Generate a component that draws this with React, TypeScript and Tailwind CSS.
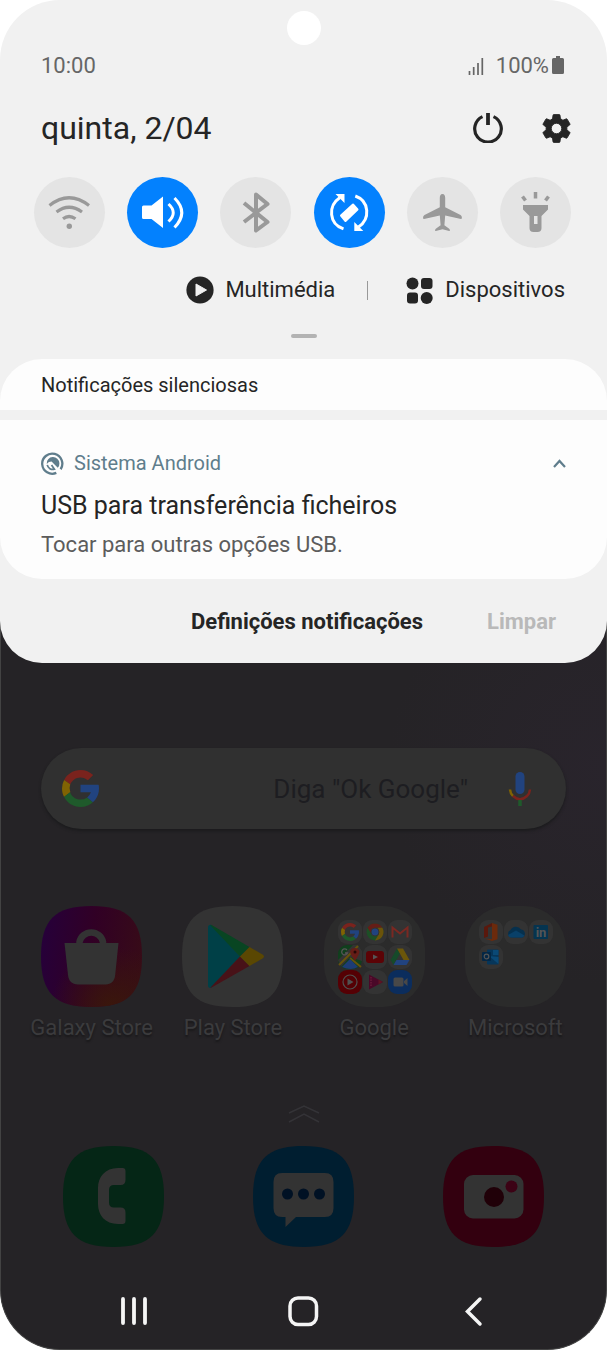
import React from "react";

interface IconProps {
  className?: string;
}

interface QuickToggle {
  label: string;
  on: boolean;
  icon: React.ReactNode;
}

const GoogleG: React.FC<IconProps> = ({ className }) => (
  <svg viewBox="4 4 40 40" className={className} aria-hidden="true">
    <path fill="#7a231d" d="M6.3 14.7l6.600 4.800C14.700 15.100 19 12 24 12c3.100 0 5.800 1.200 8 3.100l5.700-5.700C34 6 29.300 4 24 4 16.300 4 9.700 8.300 6.300 14.700z" />
    <path fill="#806303" d="M6.300 14.700A20 20 0 0 0 4 24c0 3.300.8 6.500 2.300 9.300l6.700-5.200a12 12 0 0 1-.1-8.600z" />
    <path fill="#1f5a2b" d="M24 44c5.200 0 9.900-2 13.400-5.200l-6.200-5.200A12 12 0 0 1 24 36c-5.200 0-9.600-3.300-11.300-8l-6.500 5C9.500 39.600 16.200 44 24 44z" />
    <path fill="#21437f" d="M43.600 20H24v8h11.300a12 12 0 0 1-4.100 5.600l6.200 5.200C37 39.200 44 34 44 24c0-1.300-.1-2.700-.4-4z" />
  </svg>
);

const SQUIRCLE =
  "M50.500 0C87 0 101 14 101 50.500S87 101 50.500 101 0 87 0 50.500 14 0 50.500 0Z";

const TOGGLES: QuickToggle[] = [
  {
    label: "Wi-Fi",
    on: false,
    icon: (
      <g fill="none" stroke="currentColor" strokeWidth="3.200">
        <path d="M15.500 28.500q19.500-15.500 39.500 0M22.500 35q12.500-9.500 25.500 0M29 41.800q6-4.600 12.500 0" />
        <circle cx="35.300" cy="49.300" r="2.700" fill="currentColor" stroke="none" />
      </g>
    ),
  },
  {
    label: "Som",
    on: true,
    icon: (
      <g fill="none" stroke="currentColor" strokeWidth="3">
        <path d="M16.500 28.500h8L36 19.500V51L24.500 42h-8a1.500 1.500 0 0 1-1.500-1.500V30a1.500 1.500 0 0 1 1.500-1.500z" fill="currentColor" stroke="none" />
        <path d="M41.500 27q9.500 8.500 0 17.500M47.500 21q14.500 14.500 0 29.500" />
      </g>
    ),
  },
  {
    label: "Bluetooth",
    on: false,
    icon: (
      <path d="M24 26l23.500 19L36 53.500v-36L47.500 27 24 45" fill="none" stroke="currentColor" strokeWidth="4" strokeLinejoin="round" />
    ),
  },
  {
    label: "Rotação automática",
    on: true,
    icon: (
      <g fill="none" stroke="currentColor" strokeWidth="3">
        <path d="M29.500 51.800C15 47 13.500 29 26 20.500M41.300 19C55.500 24 56.500 42 44.500 50" />
        <path d="M21.500 17H30.500v9zM40.300 54v-9l9 9z" fill="currentColor" stroke="none" />
        <path d="M39 27.500l4.500 5L31.500 44 27 38.500z" fill="currentColor" strokeWidth="2" strokeLinejoin="round" />
      </g>
    ),
  },
  {
    label: "Modo de voo",
    on: false,
    icon: (
      <path
        fill="currentColor"
        d="M35.500 17c-2 0-2.700 2-2.700 4v9.300L17.500 38c-1.500.8-2 4.200-.5 4l15.800-3.500.8 9.700-4.800 3.600c-1 .8-1 2.500 0 2.200l6.700-1.700 6.700 1.700c1 .3 1-1.400 0-2.200l-4.800-3.600.8-9.700L54 42c1.500.2 1-3.200-.5-4l-15.300-7.700V21c0-2-.7-4-2.700-4z"
      />
    ),
  },
  {
    label: "Lanterna",
    on: false,
    icon: (
      <g>
        <path
          fill="currentColor"
          fillRule="evenodd"
          d="M23 28h25v4.500L41.500 39v12a4 4 0 0 1-4 4h-4a4 4 0 0 1-4-4V39L23 32.500zM34 39v8h3.500v-8z"
        />
        <path d="M35.500 15v6.500M22.500 19.500l3 4M48.500 19.500l-3 4" stroke="currentColor" strokeWidth="3.500" />
      </g>
    ),
  },
];

const GalaxyStoreIcon: React.FC = () => (
  <svg viewBox="0 0 101 101" className="size-[101px]" aria-hidden="true">
    <defs>
      <linearGradient id="store" x1="0" y1="0.300" x2="1" y2="0.450">
        <stop offset="0" stopColor="#26003a" />
        <stop offset="0.500" stopColor="#310025" />
        <stop offset="1" stopColor="#370b18" />
      </linearGradient>
      <radialGradient id="glow" cx="0.700" cy="1" r="0.600">
        <stop offset="0" stopColor="#3a170b" />
        <stop offset="1" stopColor="#3a170b" stopOpacity="0" />
      </radialGradient>
    </defs>
    <path d={SQUIRCLE} fill="url(#store)" />
    <path d={SQUIRCLE} fill="url(#glow)" />
    <path d="M38.500 39v-3a12 12 0 0 1 23.500 0v3" fill="none" stroke="#333333" strokeWidth="6.500" />
    <path d="M23.500 37h54l-3.300 32c-.7 6-4 9.500-9.500 9.500H37c-6 0-9.300-3.500-10-9.500z" fill="#333333" />
  </svg>
);

const PlayStoreIcon: React.FC = () => (
  <svg viewBox="0 0 101 101" className="size-[101px]" aria-hidden="true">
    <path d={SQUIRCLE} fill="#333333" />
    <path d="M26 21c0-1.500 1.500-3 3.500-2L58 50.500 29.500 81.500c-2 1-3.500 0-3.500-2z" fill="#004047" />
    <path d="M28 19l2 .3L67.500 41 58 50.500z" fill="#084522" />
    <path d="M28 82l2-.7L67.500 60 58 50.500z" fill="#481218" />
    <path d="M67.500 41l13 7.500q3 2 0 4l-13 7.500-9.500-9.500z" fill="#5a4702" />
  </svg>
);

const Tile: React.FC<{ fill?: string; children: React.ReactNode }> = ({
  fill = "#333333",
  children,
}) => (
  <svg viewBox="0 0 24 24" className="size-6" aria-hidden="true">
    <rect width="24" height="24" rx="9" fill={fill} />
    {children}
  </svg>
);

const GoogleFolder: React.FC = () => (
  <div className="grid grid-cols-[24px_24px_24px] gap-px">
    <div className="flex size-6 items-center justify-center rounded-[9px] bg-[#333333]">
      <GoogleG className="size-[18px]" />
    </div>
    <Tile>
      <circle cx="12" cy="12" r="8.500" fill="#1d4f26" />
      <path d="M4.600 7.800A8.500 8.500 0 0 1 19.400 7.800H12L8.500 14z" fill="#651d17" />
      <path d="M19.400 7.800A8.500 8.500 0 0 1 12 20.500l4-6.500-1-6.200z" fill="#6b530a" />
      <circle cx="12" cy="12" r="4" fill="#21437f" stroke="#333333" />
    </Tile>
    <Tile>
      <path d="M4.500 17.500V7.500L12 13.500l7.500-6v10" fill="none" stroke="#7a2822" strokeWidth="2" />
    </Tile>
    <Tile fill="#103f1d">
      <path d="M0 15L15 0h5l4 6v10L12 12 3 22z" fill="#343332" />
      <path d="M1 20L20 1M12 13l11 9" stroke="#66530b" strokeWidth="2" />
      <path d="M4 22l8-8 8 8q-7 4-16 0z" fill="#1d3c75" />
      <path d="M17 16q-5-7-5-9.500a5 5 0 0 1 9.500 0Q21.500 9 17 16z" fill="#651d17" />
      <circle cx="17" cy="7" r="1.500" fill="#240806" />
      <path d="M9 5a3 3 0 1 0 .5 3H7" fill="none" stroke="#555555" strokeWidth="1.300" />
    </Tile>
    <Tile>
      <rect x="3" y="6" width="18" height="12" rx="3" fill="#5c0306" />
      <path d="M10 9.500l5 2.500-5 2.500z" fill="#555555" />
    </Tile>
    <Tile>
      <path d="M9 3.500L2.500 15l3 5L12 8.500z" fill="#164a2a" />
      <path d="M9 3.500h6L21.500 15h-6z" fill="#6b560a" />
      <path d="M8.500 15h13l-3 5h-13z" fill="#21437f" />
    </Tile>
    <Tile fill="#550004">
      <circle cx="12" cy="12" r="7" fill="none" stroke="#505050" strokeWidth="1.200" />
      <path d="M9.500 8.500l6 3.500-6 3.500z" fill="#505050" />
    </Tile>
    <Tile>
      <path d="M6 4.500L20 12 6 19.500z" fill="#4a0828" />
      <path d="M8 7v10" stroke="#6a1839" strokeWidth="1.500" strokeDasharray="1.500 1" />
      <path d="M15.500 9.600l4 2.400-4 2.400z" fill="#601423" />
    </Tile>
    <Tile fill="#0b2d5d">
      <rect x="5.500" y="7.500" width="10" height="9" rx="1.500" fill="#484848" />
      <path d="M16 11l3.500-3v8L16 13z" fill="#484848" />
    </Tile>
  </div>
);

const MicrosoftFolder: React.FC = () => (
  <div className="grid grid-cols-[24px_24px_24px] gap-px">
    <Tile>
      <path d="M5 7l8-4v3.500L9 7.500v9L5 18z" fill="#5a180c" />
      <path d="M13 3l5.500 1.700v14.500L13 21l-7-2.500 7 .7z" fill="#6b2a0c" />
    </Tile>
    <Tile>
      <path d="M7 17.500a4 4 0 0 1-.5-7.500 6 6 0 0 1 10.500-.5 4.200 4.200 0 0 1 1.500 8z" fill="#06304d" />
      <path d="M4 15l8-4.500 8.500 5q-1 2-2.500 2H7q-2 0-3-2.500z" fill="#094068" />
    </Tile>
    <Tile>
      <rect x="4.500" y="5" width="14.500" height="14" rx="1" fill="#053450" />
      <text x="12" y="16.500" textAnchor="middle" className="font-[Roboto] text-[13px] font-bold" fill="#555555">in</text>
    </Tile>
    <Tile>
      <rect x="8" y="4.500" width="11.500" height="15" rx="1" fill="#06365a" />
      <path d="M14 5h5.500v5H14zM10 11l9.500 1v7z" fill="#0a4976" />
      <rect x="3" y="7" width="9" height="9" rx="1" fill="#042745" />
      <circle cx="7.500" cy="11.500" r="2.300" fill="none" stroke="#555555" strokeWidth="1.200" />
    </Tile>
  </div>
);

const Folder: React.FC<{ children: React.ReactNode }> = ({ children }) => (
  <div className="size-[101px] rounded-[42px] bg-[#2b2b2b] p-[14px]">{children}</div>
);

const APPS = [
  { name: "Galaxy Store", icon: <GalaxyStoreIcon /> },
  { name: "Play Store", icon: <PlayStoreIcon /> },
  { name: "Google", icon: <Folder><GoogleFolder /></Folder> },
  { name: "Microsoft", icon: <Folder><MicrosoftFolder /></Folder> },
];

const DOCK = [
  {
    name: "Telefone",
    fill: "#052616",
    icon: (
      <path
        fill="#333333"
        d="M55 22h4.500q3 0 3 3V34q0 5-5 5h-6.500q-5 0-5 5v12.500q0 5 5 5h6.500q5 0 5 5v8.500q0 3-3 3H55C42 78 35 69 35 58V42C35 31 42 22 55 22z"
      />
    ),
  },
  {
    name: "Mensagens",
    fill: "#001e30",
    icon: (
      <g>
        <path fill="#333333" d="M29 27h43q8.500 0 8.500 9v26q0 9-8.500 9H43L32.500 81V71H29q-8.500 0-8.500-9V36q0-9 8.500-9z" />
        <g fill="#001124">
          <circle cx="34.500" cy="48" r="5.500" />
          <circle cx="50.500" cy="48" r="5.500" />
          <circle cx="66.500" cy="48" r="5.500" />
        </g>
      </g>
    ),
  },
  {
    name: "Câmara",
    fill: "#33000f",
    icon: (
      <g>
        <rect x="21" y="29" width="59.500" height="43.500" rx="9" fill="#333333" />
        <circle cx="51" cy="51" r="10" fill="#200008" />
        <circle cx="68.500" cy="40.500" r="6" fill="#3c0215" />
      </g>
    ),
  },
];

const NotificationPanel: React.FC = () => (
  <section className="relative rounded-t-[60px] rounded-b-[42px] bg-[#f1f1f1] pt-[11px] text-[#252525]">
    <div className="mx-auto size-[34px] rounded-full bg-white" />

    <div className="mt-[7px] flex items-center justify-between pr-[43px] pl-[41px] text-[22px] leading-7 text-[#666666]">
      <span>10:00</span>
      <div className="flex items-center">
        <svg viewBox="0 0 16 17" className="mr-3 h-[17px] w-4" aria-hidden="true">
          <path d="M1.500 13v4M5.700 9v8M10 5v12M14.300 0v17" stroke="currentColor" strokeWidth="1.700" />
        </svg>
        <span>100%</span>
        <svg viewBox="0 0 12 18" className="mb-[2px] ml-[3px] h-[18px] w-3" aria-hidden="true">
          <path d="M4 0h4v2h2.500q1.500 0 1.500 1.500v13q0 1.500-1.500 1.500h-9Q0 18 0 16.500v-13Q0 2 1.500 2H4z" fill="currentColor" />
        </svg>
      </div>
    </div>

    <div className="mt-7 flex h-10 items-center justify-between pr-9 pl-[41px]">
      <h1 className="text-[32px] leading-10">quinta, 2/04</h1>
      <div className="flex items-center gap-[39px]">
        <button aria-label="Desligar">
          <svg viewBox="0 0 30 30" className="size-[30px]" aria-hidden="true">
            <path d="M9.500 3.600a13.300 13.300 0 1 0 11 0" fill="none" stroke="currentColor" strokeWidth="3.200" />
            <path d="M15 0v12" stroke="currentColor" strokeWidth="3.800" />
          </svg>
        </button>
        <button aria-label="Definições">
          <svg viewBox="2 2 20 20" className="size-[29px]" aria-hidden="true">
            <path
              fill="currentColor"
              stroke="currentColor"
              strokeWidth="0.600"
              d="M19.140 12.940c.04-.3.06-.61.06-.94s-.02-.64-.07-.94l2.030-1.580a.49.49 0 0 0 .12-.61l-1.920-3.320a.49.49 0 0 0-.59-.22l-2.390.96a7 7 0 0 0-1.620-.94l-.36-2.540a.48.48 0 0 0-.48-.41h-3.840a.48.48 0 0 0-.47.41l-.36 2.540c-.59.24-1.130.57-1.620.94l-2.390-.96a.49.49 0 0 0-.59.22L2.740 8.870a.48.48 0 0 0 .12.61l2.030 1.580c-.05.3-.09.63-.09.94s.02.64.07.94l-2.030 1.580a.49.49 0 0 0-.12.61l1.920 3.320c.12.22.37.29.59.22l2.390-.96c.5.38 1.030.7 1.620.94l.36 2.540c.05.24.24.41.48.41h3.840c.24 0 .44-.17.47-.41l.36-2.540c.59-.24 1.130-.56 1.620-.94l2.390.96c.22.08.47 0 .59-.22l1.920-3.320a.48.48 0 0 0-.12-.61zM12 15.600A3.600 3.600 0 1 1 12 8.400a3.600 3.600 0 0 1 0 7.200z"
            />
          </svg>
        </button>
      </div>
    </div>

    <div className="mt-[29px] flex justify-between pr-9 pl-[34px]">
      {TOGGLES.map((toggle) => (
        <button
          key={toggle.label}
          aria-label={toggle.label}
          aria-pressed={toggle.on}
          className={`size-[71px] rounded-full ${
            toggle.on ? "bg-[#0381fe] text-white" : "bg-[#e4e4e4] text-[#999999]"
          }`}
        >
          <svg viewBox="0 0 71 71" className="size-full" aria-hidden="true">
            {toggle.icon}
          </svg>
        </button>
      ))}
    </div>

    <div className="mt-7 flex items-center justify-end pr-[42px] text-[22px] leading-7">
      <button className="flex items-center gap-[11px]">
        <svg viewBox="0 0 28 28" className="size-7" aria-hidden="true">
          <circle cx="14" cy="14" r="13.600" fill="currentColor" />
          <path d="M10 8l10.500 6L10 20z" fill="#f1f1f1" stroke="#f1f1f1" strokeLinejoin="round" />
        </svg>
        Multimédia
      </button>
      <span className="mr-[38px] ml-8 h-[19px] w-px bg-[#999999]" />
      <button className="flex items-center gap-3">
        <svg viewBox="0 0 27 27" className="size-[27px]" fill="currentColor" aria-hidden="true">
          <circle cx="6.500" cy="6.500" r="6" />
          <rect x="15" y="1" width="11.500" height="11" rx="3" />
          <rect x="1" y="15.500" width="11" height="11" rx="3" />
          <circle cx="20.700" cy="21" r="6" />
        </svg>
        Dispositivos
      </button>
    </div>

    <div className="mx-auto mt-[30px] h-1 w-[26px] rounded-full bg-[#b3b3b3]" />

    <h2 className="mt-[21px] rounded-t-[42px] bg-[#fdfdfd] px-[41px] pt-[13px] pb-[11px] text-[20px] leading-[27px]">
      Notificações silenciosas
    </h2>

    <article className="mt-[10px] rounded-b-[42px] bg-[#fdfdfd] px-[41px] pt-[29px] pb-5">
      <div className="flex items-center text-[#5f7d8c]">
        <svg viewBox="0 0 24 24" className="mr-[10px] size-[23px]" fill="none" stroke="currentColor" aria-hidden="true">
          <path d="M16 21.800A10.500 10.500 0 1 1 20.500 18" strokeWidth="2.400" />
          <path d="M7.500 7.500A6.500 6.500 0 0 1 17.500 16.500L11 10Q8 10 6 12.500 5.500 9.500 7.500 7.500z" fill="currentColor" stroke="none" />
          <path d="M6.500 13.500A6 6 0 0 0 14 18l-3-4.500" strokeWidth="1.800" />
        </svg>
        <span className="text-[20px] leading-7">Sistema Android</span>
        <button aria-label="Fechar detalhes" className="ml-auto">
          <svg viewBox="0 0 13 9" className="h-[9px] w-[13px]" aria-hidden="true">
            <path d="M1 8l5.500-6L12 8" fill="none" stroke="currentColor" strokeWidth="2.200" />
          </svg>
        </button>
      </div>
      <h3 className="mt-[13px] text-[25px] leading-8">USB para transferência ficheiros</h3>
      <p className="mt-[9px] text-[22px] leading-7 text-[#5c5c5c]">Tocar para outras opções USB.</p>
    </article>

    <div className="flex justify-end gap-16 pt-[29px] pr-[51px] pb-[27px] text-[22px] leading-7 font-bold">
      <button>Definições notificações</button>
      <button disabled className="text-[#b9b9b9]">Limpar</button>
    </div>
  </section>
);

const HomeScreen: React.FC = () => (
  <section className="pt-[85px]">
    <label className="mx-[40px] flex h-[81px] items-center rounded-full bg-[#303030] pr-[34px] pl-[21px] shadow-[0_2px_3px_#1b1b1d]">
      <GoogleG className="size-[37px] shrink-0" />
      <input
        type="search"
        aria-label="Pesquisar"
        placeholder={'Diga "Ok Google"'}
        className="mr-10 min-w-0 flex-1 bg-transparent text-right text-[26px] leading-8 outline-none placeholder:text-[#1d1d21] [&::-webkit-search-cancel-button]:hidden"
      />
      <svg viewBox="0 0 24 36" className="h-9 w-6 shrink-0" fill="none" aria-hidden="true">
        <rect x="7.500" y="1" width="9" height="22" rx="4.500" fill="#21437f" />
        <path d="M2 18.500q.3 4 3 6.500" stroke="#806303" strokeWidth="2.500" />
        <path d="M5 25q7 6.500 14 0 2.700-2.500 3-6.500" stroke="#7a231d" strokeWidth="2.500" />
        <path d="M12 29v6" stroke="#1f5a2b" strokeWidth="3.500" />
      </svg>
    </label>

    <div className="mt-[77px] grid grid-cols-4 px-5">
      {APPS.map((app) => (
        <button key={app.name} className="flex flex-col items-center gap-[7px]">
          {app.icon}
          <span className="text-[22px] leading-7 whitespace-nowrap text-[#3b3b3d] [text-shadow:0_2px_2px_#19181a]">
            {app.name}
          </span>
        </button>
      ))}
    </div>

    <svg viewBox="0 0 32 20" className="mx-auto mt-[62px] h-5 w-8" fill="none" aria-hidden="true">
      <path d="M1 9l15-7 15 7M1 18l15-8 15 8" stroke="#343337" strokeWidth="1.500" />
    </svg>

    <div className="mt-[22px] grid grid-cols-3 justify-items-center px-[18px]">
      {DOCK.map((app) => (
        <button key={app.name} aria-label={app.name}>
          <svg viewBox="0 0 101 101" className="size-[101px]" aria-hidden="true">
            <path d={SQUIRCLE} fill={app.fill} />
            {app.icon}
          </svg>
        </button>
      ))}
    </div>
  </section>
);

const NavigationBar: React.FC = () => (
  <nav className="mt-12 grid grid-cols-3 justify-items-center px-12 pb-[22px] text-[#f5f5f5]">
    <button aria-label="Recentes">
      <svg viewBox="0 0 32 32" className="size-8" aria-hidden="true">
        <path d="M5 4v24M16 4v24M27 4v24" stroke="currentColor" strokeWidth="3.800" strokeLinecap="round" />
      </svg>
    </button>
    <button aria-label="Início">
      <svg viewBox="0 0 32 32" className="size-8" aria-hidden="true">
        <rect x="3" y="3" width="26.500" height="26.500" rx="8" fill="none" stroke="currentColor" strokeWidth="3.500" />
      </svg>
    </button>
    <button aria-label="Anterior">
      <svg viewBox="0 0 32 32" className="size-8" aria-hidden="true">
        <path d="M23 4L10.500 16.500 23 29" fill="none" stroke="currentColor" strokeWidth="3.500" strokeLinecap="round" />
      </svg>
    </button>
  </nav>
);

const App: React.FC = () => {
  return (
    <main className="bg-white font-[Roboto,sans-serif]">
      <NotificationPanel />
      {/* The dark screen starts behind the panel's rounded bottom corners. */}
      <div className="-mt-[42px] rounded-b-[60px] border-x border-b border-[#434343] bg-[#252326] bg-[radial-gradient(circle_at_100%_20%,#29242c_0%,#252326_26%)] pt-[42px]">
        <HomeScreen />
        <NavigationBar />
      </div>
    </main>
  );
};

export default App;
